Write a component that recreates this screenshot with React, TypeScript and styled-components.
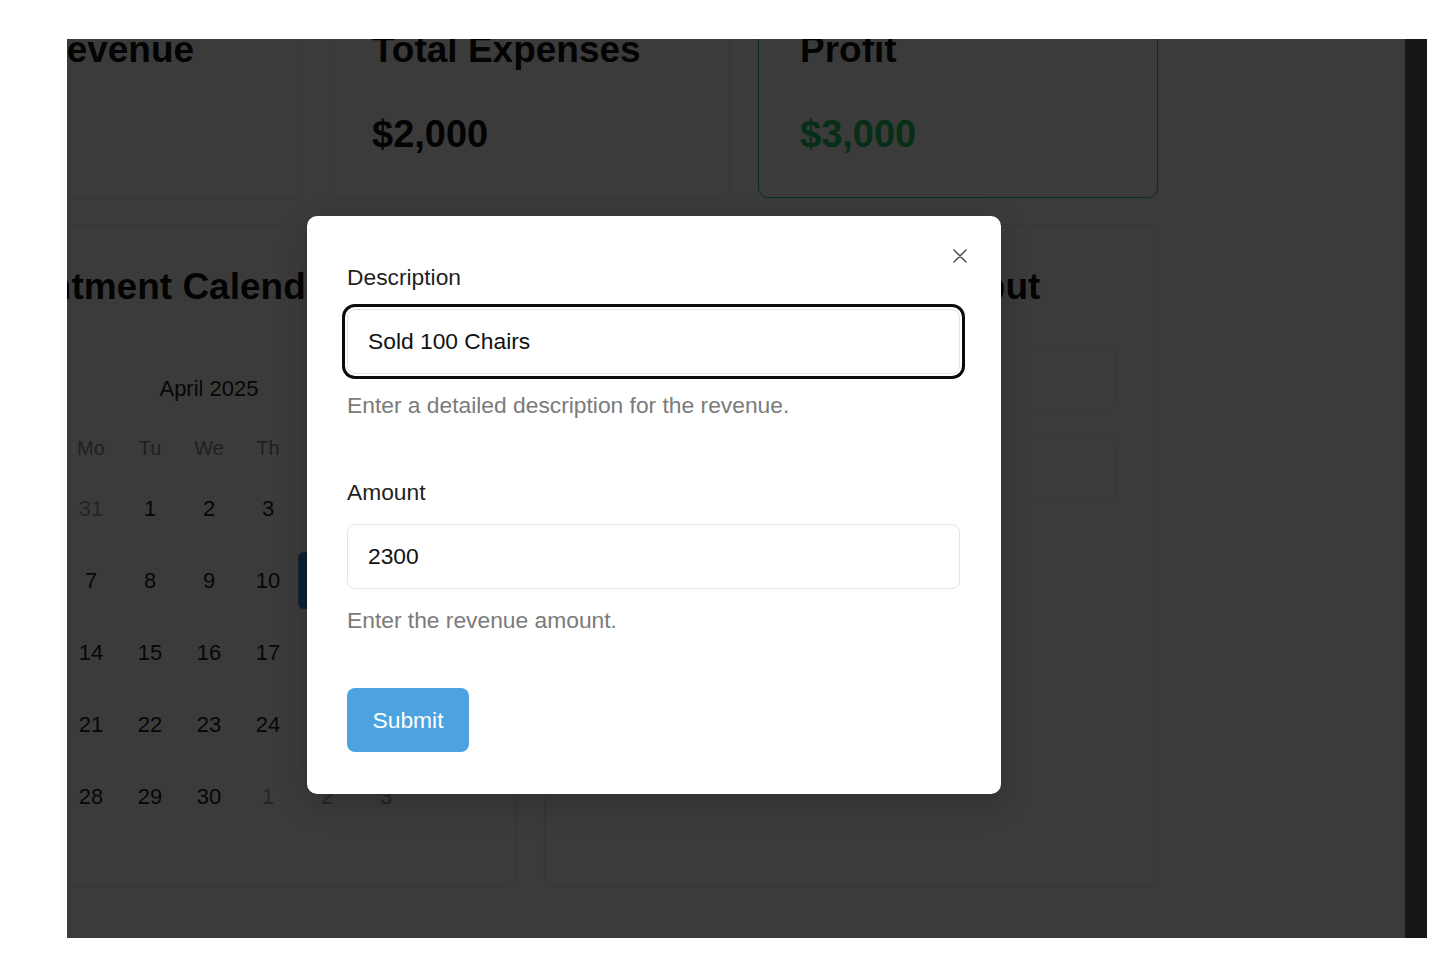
import React, { useEffect, useRef, FC } from "react";
import styled, { createGlobalStyle } from "styled-components";

const GlobalStyle = createGlobalStyle`
  * {
    box-sizing: border-box;
  }
  html,
  body {
    margin: 0;
    padding: 0;
    background: #ffffff;
  }
  body {
    font-family: "Liberation Sans", Arial, Helvetica, sans-serif;
  }
`;

const Frame = styled.div`
  margin: 39px 0 0 67px;
  width: 1360px;
  height: 899px;
  display: flex;
  overflow: hidden;
`;

const Viewport = styled.div`
  flex: 1;
  position: relative;
  overflow: hidden;
`;

const ScrollTrack = styled.div`
  width: 22px;
  flex-shrink: 0;
  background: #161616;
`;

const AppShell = styled.div`
  position: relative;
  width: 1502px;
  height: 960px;
  margin: -52px 0 0 -164px;
  background: #ffffff;
`;

const Main = styled.main`
  width: 1256px;
  margin-left: -1px;
  display: flex;
  flex-direction: column;
  gap: 26px;
`;

const StatsRow = styled.div`
  display: grid;
  grid-template-columns: repeat(3, 400px);
  gap: 28px;
`;

const PanelsRow = styled.div`
  display: grid;
  grid-template-columns: repeat(2, 614px);
  gap: 28px;
`;

const Card = styled.section<{ $accent?: string }>`
  background: #ffffff;
  border: 1px solid ${(p) => p.$accent ?? "#e5e7eb"};
  border-radius: 10px;
  padding: 40px 41px;
  box-shadow: 0 1px 3px rgba(0, 0, 0, 0.06);
`;

const CardTitle = styled.h2`
  margin: 0;
  font-size: 37px;
  line-height: 43px;
  font-weight: 700;
  color: #111111;
  white-space: nowrap;
`;

const StatValue = styled.div<{ $color?: string }>`
  margin-top: 40px;
  font-size: 38px;
  line-height: 46px;
  font-weight: 700;
  color: ${(p) => p.$color ?? "#111111"};
`;

const CalendarWrap = styled.div`
  width: 413px;
  margin: 66px auto 20px;
`;

const CalendarCaption = styled.div`
  text-align: center;
  font-size: 22px;
  line-height: 30px;
  color: #222222;
`;

const WeekRow = styled.div`
  margin-top: 30px;
  display: grid;
  grid-template-columns: repeat(7, 59px);
`;

const WeekDay = styled.div`
  text-align: center;
  font-size: 20px;
  line-height: 28px;
  color: #8a8a8a;
`;

const DayGrid = styled.div`
  margin-top: 18px;
  display: grid;
  grid-template-columns: repeat(7, 59px);
  grid-auto-rows: 57px;
  row-gap: 15px;
`;

const DayCell = styled.div<{ $outside?: boolean; $selected?: boolean }>`
  display: flex;
  align-items: center;
  justify-content: center;
  border-radius: 6px;
  font-size: 22px;
  color: ${(p) => (p.$selected ? "#ffffff" : p.$outside ? "#9a9a9a" : "#222222")};
  background: ${(p) => (p.$selected ? "#3b8fd6" : "transparent")};
`;

const ActionList = styled.div`
  margin-top: 39px;
  display: flex;
  flex-direction: column;
  gap: 27px;
`;

const ActionButton = styled.button`
  height: 63px;
  border: 1px solid #e5e7eb;
  border-radius: 8px;
  background: #ffffff;
  font-family: inherit;
  font-size: 20px;
  color: #222222;
`;

const Overlay = styled.div`
  position: absolute;
  inset: 0;
  background: rgba(0, 0, 0, 0.77);
  display: flex;
  justify-content: center;
  align-items: flex-start;
  padding-top: 229px;
`;

const Modal = styled.div`
  position: relative;
  width: 694px;
  background: #ffffff;
  border-radius: 10px;
  padding: 48px 41px 42px 40px;
  box-shadow: 0 10px 30px rgba(0, 0, 0, 0.2);
`;

const CloseButton = styled.button`
  position: absolute;
  top: 28px;
  right: 29px;
  width: 24px;
  height: 24px;
  padding: 0;
  border: none;
  background: transparent;
  display: flex;
  align-items: center;
  justify-content: center;
  cursor: pointer;
`;

const Form = styled.form`
  display: flex;
  flex-direction: column;
  gap: 60px;
`;

const Field = styled.div`
  display: flex;
  flex-direction: column;
`;

const Label = styled.label`
  font-size: 22.8px;
  line-height: 26px;
  color: #1f1f1f;
  margin-bottom: 19px;
`;

const TextInput = styled.input<{ $focused?: boolean }>`
  width: 100%;
  height: 65px;
  border: 1px solid #e5e5e5;
  border-radius: 8px;
  padding: 0 20px;
  font-family: inherit;
  font-size: 22.8px;
  color: #111111;
  background: #ffffff;
  outline: none;
  caret-color: #111111;
  box-shadow: ${(p) => (p.$focused ? "0 0 0 2px #ffffff, 0 0 0 5px #0b0b0b" : "none")};
`;

const Helper = styled.p`
  margin: 17px 0 0;
  font-size: 22.8px;
  line-height: 28px;
  color: #7b7b7b;
`;

const SubmitButton = styled.button`
  margin-top: -6px;
  align-self: flex-start;
  width: 122px;
  height: 64px;
  border: none;
  border-radius: 8px;
  background: #4ca3df;
  color: #ffffff;
  font-family: inherit;
  font-size: 22.8px;
  cursor: pointer;
`;

type Day = { n: number; outside?: boolean; selected?: boolean };

const weekDays = ["Su", "Mo", "Tu", "We", "Th", "Fr", "Sa"];

const buildDays = (): Day[] => {
  const days: Day[] = [{ n: 30, outside: true }, { n: 31, outside: true }];
  for (let i = 1; i <= 30; i++) days.push({ n: i, selected: i === 11 });
  for (let i = 1; i <= 3; i++) days.push({ n: i, outside: true });
  return days;
};

const CloseIcon = () => (
  <svg width="16" height="16" viewBox="0 0 16 16" fill="none">
    <path d="M2 2L14 14M14 2L2 14" stroke="#555" strokeWidth="1.6" strokeLinecap="round" />
  </svg>
);

const App: FC = () => {
  const descRef = useRef<HTMLInputElement>(null);

  useEffect(() => {
    const el = descRef.current;
    if (el) {
      el.focus({ preventScroll: true });
      el.setSelectionRange(el.value.length, el.value.length);
    }
  }, []);

  return (
    <>
      <GlobalStyle />
      <Frame>
        <Viewport>
          <AppShell>
            <Main>
              <StatsRow>
                <Card>
                  <CardTitle>Total Revenue</CardTitle>
                  <StatValue>$5,000</StatValue>
                </Card>
                <Card>
                  <CardTitle>Total Expenses</CardTitle>
                  <StatValue>$2,000</StatValue>
                </Card>
                <Card $accent="#22c55e">
                  <CardTitle>Profit</CardTitle>
                  <StatValue $color="#22c55e">$3,000</StatValue>
                </Card>
              </StatsRow>
              <PanelsRow>
                <Card>
                  <CardTitle>Appointment Calendar</CardTitle>
                  <CalendarWrap>
                    <CalendarCaption>April 2025</CalendarCaption>
                    <WeekRow>
                      {weekDays.map((d) => (
                        <WeekDay key={d}>{d}</WeekDay>
                      ))}
                    </WeekRow>
                    <DayGrid>
                      {buildDays().map((d, i) => (
                        <DayCell key={i} $outside={d.outside} $selected={d.selected}>
                          {d.n}
                        </DayCell>
                      ))}
                    </DayGrid>
                  </CalendarWrap>
                </Card>
                <Card>
                  <CardTitle>Revenue &amp; Expense Input</CardTitle>
                  <ActionList>
                    <ActionButton>Add Revenue</ActionButton>
                    <ActionButton>Add Expense</ActionButton>
                  </ActionList>
                </Card>
              </PanelsRow>
            </Main>

            <Overlay>
              <Modal role="dialog">
                <CloseButton aria-label="Close">
                  <CloseIcon />
                </CloseButton>
                <Form onSubmit={(e) => e.preventDefault()}>
                  <Field>
                    <Label htmlFor="desc">Description</Label>
                    <TextInput id="desc" ref={descRef} defaultValue="Sold 100 Chairs" $focused />
                    <Helper>Enter a detailed description for the revenue.</Helper>
                  </Field>
                  <Field>
                    <Label htmlFor="amount">Amount</Label>
                    <TextInput id="amount" defaultValue="2300" />
                    <Helper>Enter the revenue amount.</Helper>
                  </Field>
                  <SubmitButton type="submit">Submit</SubmitButton>
                </Form>
              </Modal>
            </Overlay>
          </AppShell>
        </Viewport>
        <ScrollTrack />
      </Frame>
    </>
  );
};

export default App;
